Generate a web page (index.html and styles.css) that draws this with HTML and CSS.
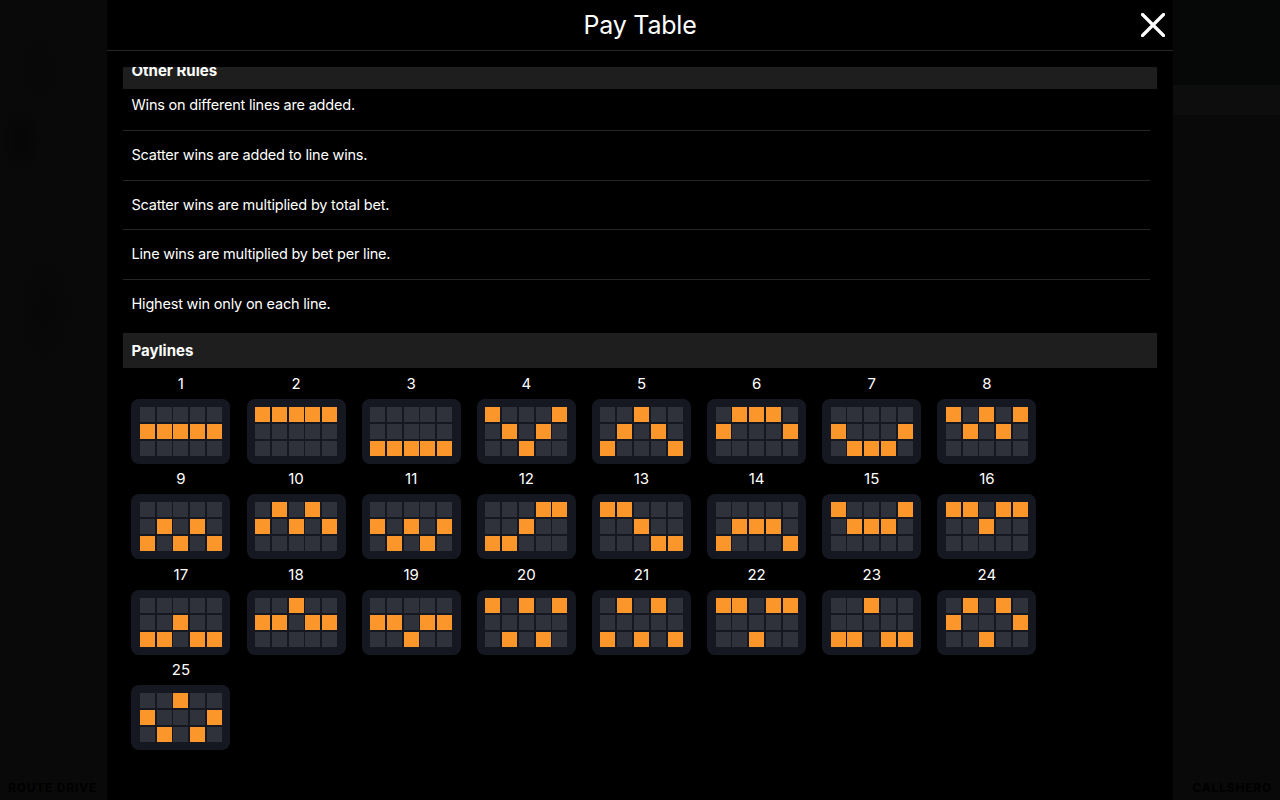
FILE: index.html
```html
<!DOCTYPE html>
<html lang="en">
<head>
  <meta charset="UTF-8" />
  <meta name="viewport" content="width=device-width, initial-scale=1.0" />
  <title>Pay Table</title>
  <link rel="stylesheet" href="styles.css">
</head>
<body>

  <div class="game game--left"><span class="game__brand">ROUTE DRIVE</span></div>

  <main class="paytable">
    <header class="paytable__header">
      <h1 class="paytable__title">Pay Table</h1>
      <button class="paytable__close" aria-label="Close">
        <svg viewBox="0 0 24 24" width="24" height="24">
          <path d="M1.5 1.5 L22.5 22.5 M22.5 1.5 L1.5 22.5" />
        </svg>
      </button>
    </header>

    <div class="paytable__body">
      <h2 class="section__title section__title--stuck">Other Rules</h2>
      <ul class="rules">
        <li class="rules__item">Wins on different lines are added.</li>
        <li class="rules__item">Scatter wins are added to line wins.</li>
        <li class="rules__item">Scatter wins are multiplied by total bet.</li>
        <li class="rules__item">Line wins are multiplied by bet per line.</li>
        <li class="rules__item">Highest win only on each line.</li>
      </ul>

      <h2 class="section__title">Paylines</h2>
      <div class="paylines"></div>
    </div>
  </main>

  <div class="game game--right"><span class="game__brand">CALLSHERO</span></div>

  <script src="script.js"></script>
</body>
</html>
```

FILE: styles.css
```css
* {
  margin: 0;
  padding: 0;
  box-sizing: border-box;
}

body {
  display: flex;
  height: 100vh;
  overflow: hidden;
  background-color: #090909;
  color: #fff;
  font-family: "Inter", "Liberation Sans", sans-serif;
}

.game {
  position: relative;
  flex: 1;
  background-color: #090909;
}

.game--left {
  background-image:
    radial-gradient(ellipse 22px 36px at 22px 140px, #050505, transparent),
    radial-gradient(ellipse 30px 50px at 40px 70px, #070807, transparent),
    radial-gradient(ellipse 30px 60px at 45px 310px, #060706, transparent);
}

.game--right {
  background-image:
    linear-gradient(#0d0d0d, #0d0d0d),
    linear-gradient(#060707, #060707);
  background-size: 100% 30px, 100% 85px;
  background-position: 0 85px, 0 0;
  background-repeat: no-repeat;
}

.game__brand {
  position: absolute;
  bottom: 5px;
  font-size: 12px;
  font-weight: 700;
  letter-spacing: 0.8px;
  color: #000;
  white-space: nowrap;
}

.game--left .game__brand {
  left: 8px;
}

.game--right .game__brand {
  right: 8px;
}

.paytable {
  display: flex;
  flex-direction: column;
  flex: 0 0 1066px;
  background-color: #000;
}

.paytable__header {
  position: relative;
  flex: 0 0 51px;
  border-bottom: 1px solid #262626;
  text-align: center;
}

.paytable__title {
  font-size: 25px;
  font-weight: 400;
  letter-spacing: -0.2px;
  line-height: 50px;
}

.paytable__close {
  position: absolute;
  top: 13px;
  right: 8px;
  width: 24px;
  height: 24px;
  border: none;
  background: none;
}

.paytable__close path {
  fill: none;
  stroke: #fff;
  stroke-width: 3.2;
  stroke-linecap: round;
}

.paytable__body {
  flex: 1;
  margin-top: 16px;
  padding: 0 16px;
  overflow: hidden;
}

.section__title {
  height: 35px;
  padding-left: 8.5px;
  background-color: #1e1e1e;
  font-size: 15px;
  font-weight: 700;
  line-height: 35px;
}

/* scrolled up a bit, the header sits over the first row */
.section__title--stuck {
  position: relative;
  margin-top: -13px;
  line-height: 33px;
}

.rules {
  list-style: none;
  margin-top: -8px;
  margin-right: 7px;
}

.rules__item {
  height: 49.75px;
  padding-left: 8.5px;
  border-bottom: 1px solid #262626;
  font-size: 14.5px;
  letter-spacing: -0.2px;
  line-height: 48px;
}

.rules__item:last-child {
  height: 53px;
  border-bottom: none;
}

.paylines {
  display: grid;
  grid-template-columns: repeat(8, 115.15px);
  grid-auto-rows: 95.33px;
  padding: 4.9px 0 0 8.4px;
}

.payline__number {
  height: 26px;
  width: 99px;
  font-size: 15px;
  line-height: 22px;
  text-align: center;
}

.payline__board {
  display: grid;
  grid-template-columns: repeat(5, 15px);
  grid-auto-rows: 15px;
  gap: 2px 1.8px;
  justify-content: center;
  align-content: center;
  width: 99px;
  height: 65px;
  border-radius: 8px;
  background-color: #151821;
}

.payline__cell {
  background-color: #2f323b;
}

.payline__cell--on {
  background-color: #fa962a;
}
```

FILE: script.js
```js
// row of the lit cell in each of the 5 columns
const lines = [
  [1, 1, 1, 1, 1], [0, 0, 0, 0, 0], [2, 2, 2, 2, 2], [0, 1, 2, 1, 0], [2, 1, 0, 1, 2],
  [1, 0, 0, 0, 1], [1, 2, 2, 2, 1], [0, 1, 0, 1, 0], [2, 1, 2, 1, 2], [1, 0, 1, 0, 1],
  [1, 2, 1, 2, 1], [2, 2, 1, 0, 0], [0, 0, 1, 2, 2], [2, 1, 1, 1, 2], [0, 1, 1, 1, 0],
  [0, 0, 1, 0, 0], [2, 2, 1, 2, 2], [1, 1, 0, 1, 1], [1, 1, 2, 1, 1], [0, 2, 0, 2, 0],
  [2, 0, 2, 0, 2], [0, 0, 2, 0, 0], [2, 2, 0, 2, 2], [1, 0, 2, 0, 1], [1, 2, 0, 2, 1],
];

const paylines = document.querySelector('.paylines');

lines.forEach((line, index) => {
  let cells = '';
  for (let row = 0; row < 3; row++) {
    for (let col = 0; col < 5; col++) {
      const on = line[col] === row ? ' payline__cell--on' : '';
      cells += `<div class="payline__cell${on}"></div>`;
    }
  }
  paylines.innerHTML += `<div class="payline">
    <div class="payline__number">${index + 1}</div>
    <div class="payline__board">${cells}</div>
  </div>`;
});
```
